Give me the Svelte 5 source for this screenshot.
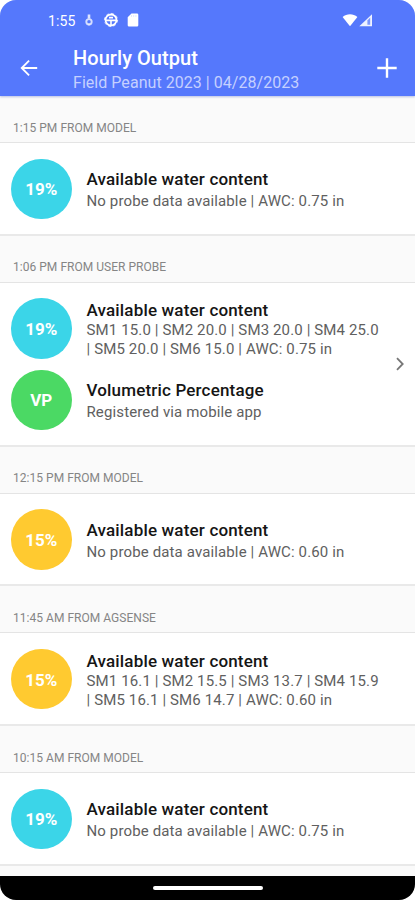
<script>
  const sections = [
    { label: '1:15 PM FROM MODEL', rows: [
      { badge: '19%', tone: 'cyan', title: 'Available water content', lines: ['No probe data available | AWC: 0.75 in'] }
    ] },
    { label: '1:06 PM FROM USER PROBE', link: true, rows: [
      { badge: '19%', tone: 'cyan', title: 'Available water content', lines: ['SM1 15.0 | SM2 20.0 | SM3 20.0 | SM4 25.0', '| SM5 20.0 | SM6 15.0 | AWC: 0.75 in'] },
      { badge: 'VP', tone: 'green', title: 'Volumetric Percentage', lines: ['Registered via mobile app'] }
    ] },
    { label: '12:15 PM FROM MODEL', rows: [
      { badge: '15%', tone: 'amber', title: 'Available water content', lines: ['No probe data available | AWC: 0.60 in'] }
    ] },
    { label: '11:45 AM FROM AGSENSE', rows: [
      { badge: '15%', tone: 'amber', title: 'Available water content', lines: ['SM1 16.1 | SM2 15.5 | SM3 13.7 | SM4 15.9', '| SM5 16.1 | SM6 14.7 | AWC: 0.60 in'] }
    ] },
    { label: '10:15 AM FROM MODEL', rows: [
      { badge: '19%', tone: 'cyan', title: 'Available water content', lines: ['No probe data available | AWC: 0.75 in'] }
    ] }
  ];
</script>

<div class="phone">
  <header>
    <div class="status">
      <span class="time">1:55</span>
      <svg class="mic" width="10" height="14" viewBox="0 0 10 14" fill="none" stroke="#fff">
        <path d="M5 1.4v4.2" stroke-width="2.6" opacity=".8" />
        <circle cx="5" cy="8.8" r="2.7" stroke-width="1.9" opacity=".75" />
        <path d="M5 10.5v2" stroke-width="1.4" opacity=".6" />
      </svg>
      <svg class="wheel" width="16" height="16" viewBox="0 0 16 16" fill="none" stroke="#fff">
        <circle cx="8" cy="8" r="5.5" stroke-width="1.8" />
        <circle cx="8" cy="8" r="6.6" stroke-width="1" stroke-dasharray="2.6 2.58" opacity=".8" />
        <path d="M3 8.4h10M8 8.4v4.6M6 5.6h4" stroke-width="1.6" />
      </svg>
      <svg class="sd" width="12" height="14" viewBox="0 0 12 14">
        <path d="M4.5 0.5H10a1.3 1.3 0 0 1 1.3 1.3v10.4a1.3 1.3 0 0 1-1.3 1.3H2a1.3 1.3 0 0 1-1.3-1.3V4.3z" fill="#fff" />
        <path d="M4.5 2.2v1.6M6.7 2.2v1.6M8.9 2.2v1.6" stroke="#d0daff" stroke-width=".8" />
      </svg>
      <svg class="signal" width="32" height="15" viewBox="0 0 32 15">
        <path d="M.6 4.1C4.8.3 11.2.3 15.4 4.1L8 13.2z" fill="#fff" />
        <path d="M30 1.2v12H17.3z" fill="#fff" opacity=".9" />
        <path d="M25.4 7.4l2.8-3v7.4h-2.8z" fill="#5578fc" opacity=".75" />
      </svg>
    </div>
    <div class="bar">
      <svg class="back" width="18" height="18" viewBox="0 0 18 18" fill="none" stroke="#fff" stroke-width="1.8">
        <path d="M17.2 9H2M9.1 1.6L1.7 9l7.4 7.4" />
      </svg>
      <div class="heading">
        <h1>Hourly Output</h1>
        <p>Field Peanut 2023 | 04/28/2023</p>
      </div>
      <svg class="plus" width="20" height="20" viewBox="0 0 20 20" stroke="#fff" stroke-width="2.4">
        <path d="M10 .3v19.4M.3 10h19.4" />
      </svg>
    </div>
  </header>

  <main>
    {#each sections as section}
      <h2>{section.label}</h2>
      <section class:double={section.link}>
        <div class="rows">
          {#each section.rows as row}
            <div class="row">
              <div class="badge {row.tone}">{row.badge}</div>
              <div class="copy" class:tall={row.lines.length > 1}>
                <h3>{row.title}</h3>
                {#each row.lines as line}<p>{line}</p>{/each}
              </div>
            </div>
          {/each}
        </div>
        {#if section.link}
          <svg class="chevron" width="8" height="14" viewBox="0 0 8 14" fill="none" stroke="#777" stroke-width="1.8">
            <path d="M1 1.2L6.7 7 1 12.8" />
          </svg>
        {/if}
      </section>
    {/each}
  </main>

  <footer><span></span></footer>
</div>

<style>
  :global(body) { background: #fff; }
  .phone {
    width: 415px; height: 900px; box-sizing: border-box; overflow: hidden;
    display: flex; flex-direction: column;
    border-radius: 16px; background: #fafafa;
    font-family: Roboto, sans-serif;
  }
  h1, h2, h3, p { margin: 0; white-space: nowrap; }
  header {
    height: 96px; flex: none; background: #5578fc; color: #fff;
    box-shadow: 0 1px 2px rgba(60, 85, 180, .35);
  }
  .status { height: 40px; padding: 0 42px 0 48px; display: flex; align-items: center; }
  .time { width: 28px; font-size: 14px; line-height: 16px; letter-spacing: .1px; margin-top: 2px; }
  .mic { margin-left: 7.5px; }
  .wheel { margin-left: 9.5px; }
  .sd { margin-left: 8px; }
  .signal { margin-left: auto; margin-right: -1px; }
  .bar { height: 56px; padding: 0 18px 0 20px; display: flex; align-items: center; }
  .back { flex: none; }
  .heading { flex: 1; padding: 1px 0 0 35px; }
  h1 { font-size: 20px; line-height: 27px; font-weight: 500; letter-spacing: .06px; }
  .heading p { font-size: 16px; line-height: 21px; letter-spacing: .04px; color: #c5d0ff; }
  main { flex: 1; min-height: 0; }
  h2 {
    height: 46px; box-sizing: border-box; padding: 24.5px 0 0 13px;
    font-size: 12px; line-height: 14px; font-weight: 400; letter-spacing: .03px; color: #858585;
  }
  section {
    height: 93.7px; box-sizing: border-box; padding: 1px 11px 0; background: #fff;
    border-top: 1.5px solid #e4e4e4; border-bottom: 2px solid #e9e9e9;
    display: flex; align-items: center; justify-content: space-between;
  }
  section.double { height: 165px; }
  .rows { display: flex; flex-direction: column; gap: 11px; }
  .row { display: flex; align-items: center; height: 60.5px; gap: 15px; }
  .badge {
    width: 60.5px; height: 60.5px; border-radius: 50%; flex: none;
    display: flex; align-items: center; justify-content: center; box-sizing: border-box; padding-top: 1px;
    color: #fff; font-size: 17px; font-weight: 700;
  }
  .cyan { background: #3bd5e8; }
  .green { background: #4bd964; }
  .amber { background: #ffca30; }
  h3 { font-size: 17px; line-height: 22px; font-weight: 500; letter-spacing: .17px; color: #151515; }
  .copy { padding-top: 3px; }
  .copy p { font-size: 15px; line-height: 22px; letter-spacing: .13px; color: #606060; }
  .copy.tall { padding-top: 2px; }
  .copy.tall p { line-height: 19px; }
  .chevron { flex: none; }
  footer { height: 24px; flex: none; background: #000; display: flex; justify-content: center; align-items: center; }
  footer span { width: 110px; height: 4px; border-radius: 2px; background: #fff; }
</style>
